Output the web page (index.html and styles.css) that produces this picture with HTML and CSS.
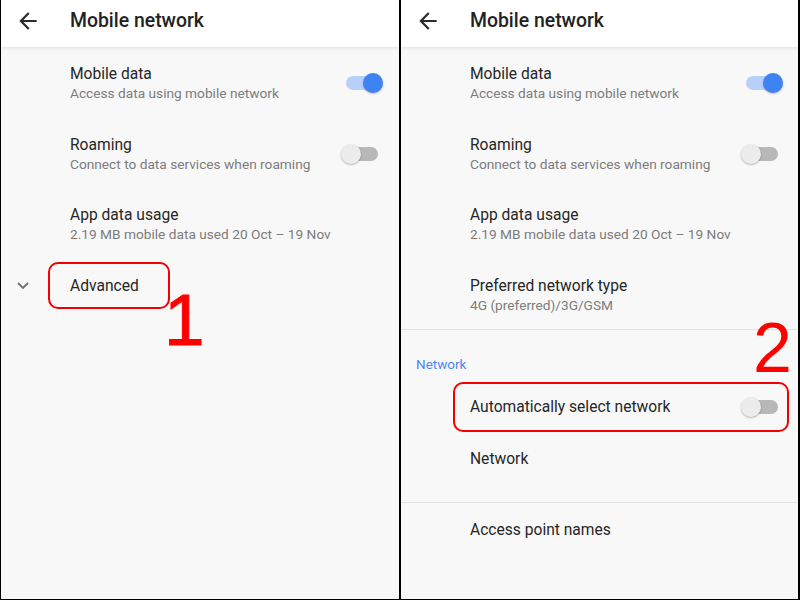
FILE: index.html
```html
<!DOCTYPE html>
<html lang="en">
<head>
<meta charset="utf-8">
<title>Mobile network</title>
<link rel="stylesheet" href="styles.css">
</head>
<body>
<div class="frame">
  <section class="panel panel-left">
    <div class="screen">
      <header class="appbar">
        <svg class="back" width="26" height="26" viewBox="0 0 24 24"><path d="M20 11H7.83l5.59-5.59L12 4l-8 8 8 8 1.41-1.41L7.83 13H20v-2z"/></svg>
        <h1 class="appbar-title">Mobile network</h1>
      </header>
      <div class="list">
        <div class="row">
          <div class="row-text">
            <div class="row-title">Mobile data</div>
            <div class="row-sub">Access data using mobile network</div>
          </div>
          <span class="switch switch-on"><span class="switch-track"></span><span class="switch-thumb"></span></span>
        </div>
        <div class="row">
          <div class="row-text">
            <div class="row-title">Roaming</div>
            <div class="row-sub">Connect to data services when roaming</div>
          </div>
          <span class="switch"><span class="switch-track"></span><span class="switch-thumb"></span></span>
        </div>
        <div class="row">
          <div class="row-text">
            <div class="row-title">App data usage</div>
            <div class="row-sub">2.19 MB mobile data used 20 Oct – 19 Nov</div>
          </div>
        </div>
        <div class="row row-lead">
          <span class="lead-icon"><svg class="chevron" width="12" height="7" viewBox="0 0 12 7"><polyline points="1,1 6,6 11,1"/></svg></span>
          <div class="row-text">
            <div class="row-title">Advanced</div>
          </div>
          <span class="callout callout-advanced"></span>
        </div>
      </div>
      <span class="step step-one">1</span>
    </div>
  </section>
  <div class="divider"></div>
  <section class="panel panel-right">
    <div class="screen">
      <header class="appbar">
        <svg class="back" width="26" height="26" viewBox="0 0 24 24"><path d="M20 11H7.83l5.59-5.59L12 4l-8 8 8 8 1.41-1.41L7.83 13H20v-2z"/></svg>
        <h1 class="appbar-title">Mobile network</h1>
      </header>
      <div class="list">
        <div class="row">
          <div class="row-text">
            <div class="row-title">Mobile data</div>
            <div class="row-sub">Access data using mobile network</div>
          </div>
          <span class="switch switch-on"><span class="switch-track"></span><span class="switch-thumb"></span></span>
        </div>
        <div class="row">
          <div class="row-text">
            <div class="row-title">Roaming</div>
            <div class="row-sub">Connect to data services when roaming</div>
          </div>
          <span class="switch"><span class="switch-track"></span><span class="switch-thumb"></span></span>
        </div>
        <div class="row">
          <div class="row-text">
            <div class="row-title">App data usage</div>
            <div class="row-sub">2.19 MB mobile data used 20 Oct – 19 Nov</div>
          </div>
        </div>
        <div class="row">
          <div class="row-text">
            <div class="row-title">Preferred network type</div>
            <div class="row-sub">4G (preferred)/3G/GSM</div>
          </div>
        </div>
        <div class="sep"></div>
        <div class="category">Network</div>
        <div class="row">
          <div class="row-text">
            <div class="row-title">Automatically select network</div>
          </div>
          <span class="switch"><span class="switch-track"></span><span class="switch-thumb"></span></span>
          <span class="callout callout-auto"></span>
        </div>
        <div class="row row-tall">
          <div class="row-text">
            <div class="row-title">Network</div>
          </div>
        </div>
        <div class="sep"></div>
        <div class="row">
          <div class="row-text">
            <div class="row-title">Access point names</div>
          </div>
        </div>
      </div>
      <span class="step step-two">2</span>
    </div>
  </section>
</div>
</body>
</html>
```

FILE: styles.css
```css
html, body {
  margin: 0;
  padding: 0;
  width: 800px;
  height: 600px;
  overflow: hidden;
  background: #000;
}

body {
  font-family: Roboto, "Noto Sans", sans-serif;
}

.frame {
  display: flex;
  width: 800px;
  height: 600px;
  box-sizing: border-box;
  border-left: 1px solid #000;
  border-right: 2px solid #000;
  border-bottom: 1px solid #000;
  background: #000;
}

.panel {
  position: relative;
  height: 100%;
  overflow: hidden;
  background: #f8f8f8;
}

.panel-left {
  width: 398px;
  flex: 0 0 398px;
}

.panel-right {
  flex: 1 1 auto;
}

.divider {
  flex: 0 0 2px;
  background: #000;
}

.screen {
  position: relative;
  width: 398px;
  height: 100%;
}

.appbar {
  display: flex;
  align-items: flex-start;
  box-sizing: border-box;
  height: 47px;
  padding: 8px 0 0 14px;
  background: #ffffff;
  box-shadow: 0 1px 4px rgba(0, 0, 0, 0.10);
  position: relative;
  z-index: 1;
}

.back {
  fill: #2b2b2b;
  flex: 0 0 auto;
}

.appbar-title {
  margin: 1px 0 0 29px;
  font-size: 19.4px;
  line-height: 24px;
  font-weight: 500;
  color: #222;
}

.list {
  display: flex;
  flex-direction: column;
}

.row {
  position: relative;
  display: flex;
  align-items: center;
  padding: 17px 16px 15.5px 69px;
}

.row-lead {
  padding-left: 0;
}

.row-tall {
  padding-bottom: 33px;
}

.lead-icon {
  flex: 0 0 69px;
  display: flex;
  padding-left: 16px;
  box-sizing: border-box;
}

.chevron {
  fill: none;
  stroke: #6f6f6f;
  stroke-width: 1.8;
}

.row-text {
  flex: 1 1 auto;
  min-width: 0;
}

.row-title {
  font-size: 15.6px;
  line-height: 20px;
  color: #262626;
}

.row-sub {
  font-size: 13.7px;
  line-height: 18px;
  color: #7c7c7c;
}

.switch {
  position: relative;
  flex: 0 0 42px;
  width: 42px;
  height: 20px;
}

.switch-track {
  position: absolute;
  left: 5px;
  top: 3px;
  width: 32px;
  height: 14px;
  border-radius: 7px;
  background: #b8b8b8;
}

.switch-thumb {
  position: absolute;
  left: 0;
  top: 0;
  width: 20px;
  height: 20px;
  border-radius: 50%;
  background: #ececec;
  box-shadow: 0 1px 2px rgba(0, 0, 0, 0.28);
}

.switch-on .switch-track {
  background: #b7d0fa;
}

.switch-on .switch-thumb {
  left: 22px;
  background: #3f82f4;
}

.sep {
  height: 1px;
  background: #e2e2e2;
}

.category {
  padding: 26px 0 7.5px 15px;
  font-size: 13.5px;
  line-height: 16px;
  color: #4a89f3;
}

.callout {
  position: absolute;
  box-sizing: border-box;
  border: 2px solid #f20000;
  border-radius: 10px;
}

.callout-advanced {
  left: 47px;
  top: 3.5px;
  width: 122px;
  height: 47px;
}

.callout-auto {
  left: 52px;
  top: 2.5px;
  width: 336px;
  height: 50px;
}

.step {
  position: absolute;
  font-family: "Liberation Sans", Arial, sans-serif;
  line-height: 1;
  color: #ff0000;
}

.step-one {
  left: 163px;
  top: 283px;
  font-size: 73px;
  font-weight: 400;
  -webkit-text-stroke: 1px #ff0000;
}

.step-two {
  left: 352px;
  top: 312.5px;
  font-size: 70px;
  font-weight: 400;
}
```
